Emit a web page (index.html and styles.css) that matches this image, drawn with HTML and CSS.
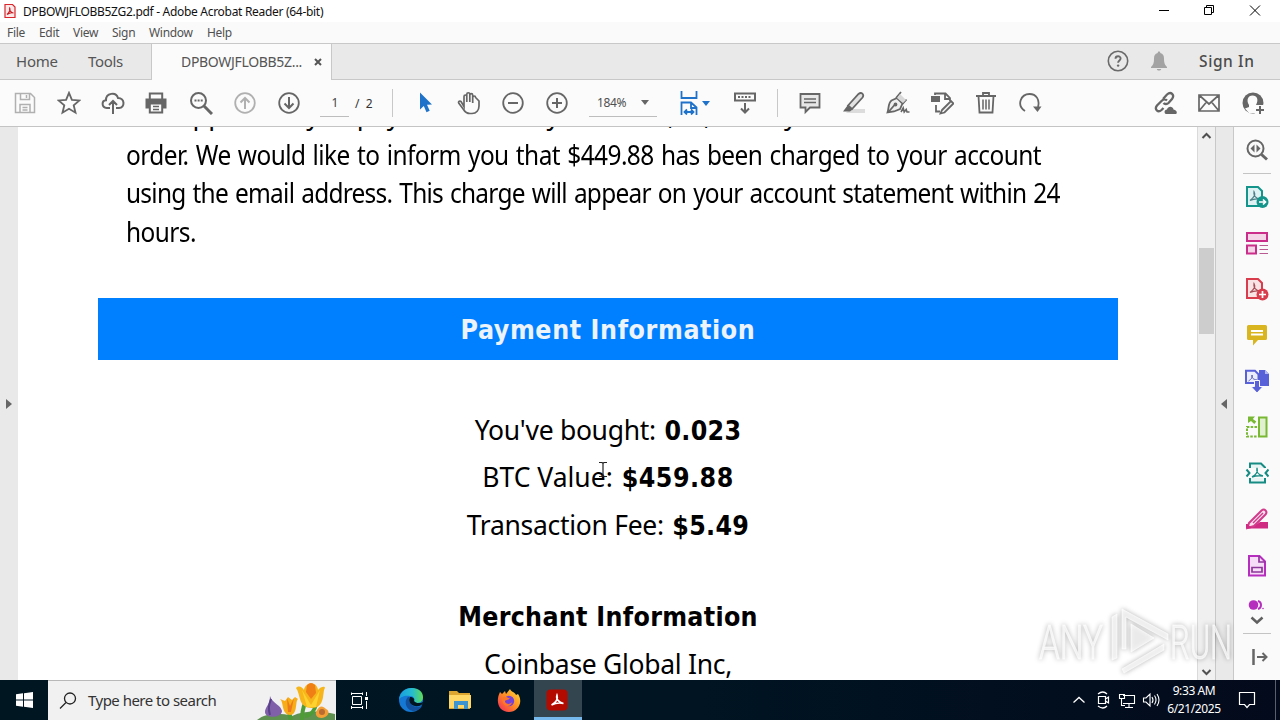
FILE: index.html
```html
<!DOCTYPE html>
<html lang="en">
<head>
<meta charset="utf-8">
<title>DPBOWJFLOBB5ZG2.pdf - Adobe Acrobat Reader (64-bit)</title>
<link rel="stylesheet" href="styles.css">
</head>
<body>
<div class="screen">
  <header class="titlebar">
    <svg class="app-icon" width="12" height="16" viewBox="0 0 12 16"><path d="M1 1.500h7.500L11 4v10.500H1z" fill="#fbe9e9" stroke="#d9252b" stroke-width="1.200"/><path d="M3 11.500C5.500 9.500 6.500 6.500 5.700 5c-.8 2 1.300 4.700 3.800 5-2-.5-4.500.2-6.500 1.500z" fill="none" stroke="#c8181f" stroke-width="1.100"/></svg>
    <span class="title-text">DPBOWJFLOBB5ZG2.pdf - Adobe Acrobat Reader (64-bit)</span>
    <div class="window-buttons">
      <svg viewBox="0 0 46 22"><path d="M15 10.500h10" stroke="#000"/></svg>
      <svg viewBox="0 0 46 22"><path d="M14.500 7.500h7v7h-7zM16.500 7V5.500h7v7H22" fill="none" stroke="#000"/></svg>
      <svg viewBox="0 0 46 22"><path d="M14 5.500l10 10M24 5.500l-10 10" stroke="#000"/></svg>
    </div>
  </header>
  <nav class="menubar"><span class="m-file">File</span><span class="m-edit">Edit</span><span class="m-view">View</span><span class="m-sign">Sign</span><span class="m-window">Window</span><span class="m-help">Help</span></nav>
  <div class="tabs">
    <span class="tab-home">Home</span><span class="tab-tools">Tools</span>
    <div class="tab-active"><span>DPBOWJFLOBB5Z...</span><svg width="8" height="8" viewBox="0 0 8 8"><path d="M1 1l6 6M7 1L1 7" stroke="#555" stroke-width="2"/></svg></div>
    <div class="tabs-right">
      <svg width="24" height="24" viewBox="0 0 24 24"><circle cx="12" cy="12" r="9.700" fill="none" stroke="#6a6a6a" stroke-width="1.600"/><path d="M9.500 9.800c0-3.400 5.200-3.200 5.100-.2 0 1.800-2.500 1.900-2.500 4.100" fill="none" stroke="#6a6a6a" stroke-width="1.900"/><circle cx="12.100" cy="16.600" r="1.200" fill="#6a6a6a"/></svg>
      <svg class="bell" width="24" height="24" viewBox="0 0 24 24"><path d="M12 2.500c1 0 1.300.7 1.300 1.500 2.800.6 3.700 2.700 3.700 5.500 0 5 1 6.500 3 8.500v1H4v-1c2-2 3-3.500 3-8.500C7 6.700 7.900 4.600 10.700 4c0-.8.3-1.500 1.300-1.500zM9.800 20h4.400c-.4 2-4 2-4.400 0z" fill="#a3a3a3"/></svg>
      <span class="sign-in">Sign In</span>
    </div>
  </div>
  <div class="toolbar">
    <div class="tool muted"><svg viewBox="0 0 24 24"><path d="M2.500 2.500h15l4 4v15h-19zM7.500 2.500v6h9v-6M7 21v-7.500h10V21M13.500 4v3M9.500 16.500h5M9.500 19h5" stroke-width="1.500"/></svg></div>
    <div class="tool"><svg viewBox="0 0 24 24"><path d="M12 1.800l2.900 7 7.500.6-5.700 4.900 1.800 7.400-6.500-4-6.500 4 1.800-7.400-5.700-4.900 7.500-.6z"/></svg></div>
    <div class="tool"><svg viewBox="0 0 24 24"><path d="M9 17H5.800C.2 16.500.5 9.500 5 9.200 4.800 2 15 .3 17 7c7 0 7.300 9.800 1 10h-3M12 23V10M8 14l4-4 4 4" stroke-width="2"/></svg></div>
    <div class="tool print"><svg viewBox="0 0 24 24"><path d="M5.800 8V2.500h12.400V8" fill="#fbfbfb" stroke-width="2"/><path d="M1.500 7.500h21v10h-21z" fill="#666" stroke="none"/><path d="M5.800 12.500h12.400v9H5.800z" fill="#fbfbfb" stroke-width="2"/><path d="M9 15.500h6M9 18.500h6" stroke-width="1.300"/></svg></div>
    <div class="tool"><svg viewBox="0 0 24 24"><circle cx="9.500" cy="9.500" r="7.500" stroke-width="2"/><path d="M15 15l8 8" stroke-width="3"/><path d="M5.500 9.500h2M8.600 9.500h2M11.700 9.500h2" stroke-width="2"/></svg></div>
    <div class="tool muted"><svg viewBox="0 0 24 24"><circle cx="12" cy="12" r="9.800"/><path d="M12 18V7M7.500 11.500L12 7l4.500 4.500" stroke-width="2"/></svg></div>
    <div class="tool"><svg viewBox="0 0 24 24"><circle cx="12" cy="12" r="9.800"/><path d="M12 6v11M7.500 12.500L12 17l4.500-4.500" stroke-width="2"/></svg></div>
    <span class="page-input">1</span><span class="page-total">/ &nbsp;2</span>
    <i class="divider first"></i>
    <div class="tool"><svg viewBox="0 0 24 24"><path d="M7 1.500l12 12-5 .3 2.700 6-3.200 1.500-2.700-6.200L7 18.500z" fill="#1f72c9" stroke="none"/></svg></div>
    <div class="tool"><svg viewBox="0 0 24 24"><path d="M7 15.500V5.500c0-2 2.800-2 2.800 0V11 3.300c0-2.100 3-2.100 3 0V11 4.200c0-2 2.900-2 2.900 0V12 6.500c0-2 2.900-2 2.900 0L22 10v5c0 4-2.500 7.500-7 7.500h-2c-3 0-5-1.500-6.500-4L1.700 12c-.8-1.700 1.300-2.500 2.500-1.300z" stroke-width="1.700"/></svg></div>
    <div class="tool"><svg viewBox="0 0 24 24"><circle cx="12" cy="12" r="9.800"/><path d="M7 12h10" stroke-width="2"/></svg></div>
    <div class="tool"><svg viewBox="0 0 24 24"><circle cx="12" cy="12" r="9.800"/><path d="M7 12h10M12 7v10" stroke-width="2"/></svg></div>
    <div class="zoom-box"><span>184%</span><i class="caret"></i></div>
    <div class="tool fit"><svg viewBox="0 0 24 24"><path d="M4.500 0v7h15V0M4.500 24V11.500H14l5.500 5V24M14 11.500V17h5M7.500 21h9M10 18.500L7.500 21l2.500 2.500M14 18.500l2.500 2.500-2.500 2.500" stroke="#1f72c9"/></svg></div>
    <i class="caret blue"></i>
    <div class="tool scroll-tool"><svg viewBox="0 0 24 24"><path d="M2 2.500h20v7H2zM12 12v10M8 17.500l4 4 4-4" stroke-width="2"/><path d="M5 6h14" stroke-dasharray="2 1.500" stroke-width="2"/></svg></div>
    <i class="divider second"></i>
    <div class="tool"><svg viewBox="0 0 24 24"><path d="M2.500 3h19v13.500H12L7.500 21v-4.500h-5z" fill="#e7e7e7"/><path d="M6 8h12M6 11.500h12" stroke-width="1.500"/></svg></div>
    <div class="tool"><svg viewBox="0 0 24 24"><path d="M8 18h15v4H4z" fill="#dcdcdc" stroke="none"/><path d="M6 14.500L16.500 3c3-2.500 6 .5 4 3.500L10 18z" fill="#e2e2e2"/><path d="M5.500 14.500l5 4L8 20.500H1z" fill="#666" stroke="none"/></svg></div>
    <div class="tool"><svg viewBox="0 0 24 24"><path d="M1.500 21.500C3 17 2 12 5.500 9.500L11 7l5.500 5.500L14 18l-6 2.500z" fill="#efefef"/><path d="M2 21.500l6.500-7.500M10 7l5-6M16.500 13l4-4.500"/><path d="M14 3l6 6-3 3-6-5z" fill="#d8d8d8" stroke="none"/><circle cx="9.500" cy="13.500" r="1" fill="#666"/><path d="M15 21l2.200-4 1 4 2-2.500.8 2.500h2.500" stroke-width="1.600"/></svg></div>
    <div class="tool"><svg viewBox="0 0 24 24"><path d="M5 4V2.500h10.500L20 7v3M15 2.500V8h5M6 14v6.500h4"/><path d="M1 5h9v6H1z" fill="#666" stroke="none"/><path d="M12 19L21 10l2.500 2.500-9 9-4 1z" fill="#eee"/></svg></div>
    <div class="tool"><svg viewBox="0 0 24 24"><path d="M4.500 5l1 16.500h13l1-16.500M2 5h20M9 5V2h6v3" /><path d="M9 8.500v10M12 8.500v10M15 8.500v10" stroke-width="1.500"/></svg></div>
    <div class="tool"><svg viewBox="0 0 24 24"><path d="M7 20C-2 14 3 3 11.500 3c7 0 10.500 6 8.500 13"/><path d="M15 15.500h8.500L19.500 21z" fill="#666" stroke="none"/></svg></div>
    <div class="toolbar-right">
      <div class="tool"><svg viewBox="0 0 24 24"><path d="M10 8l4-4.500c4-3.500 8 .5 5 4.500l-3.500 4c-1.500 1.500-4 1.200-5 0M14 9.500c-1.500-1.500-4-1-5.500.5L4 14.500c-3 4 1 7.500 4.500 4.500l2-2" stroke-width="2.300"/><path d="M13 23c-2.500-1-1.500-4.500 1-4.500 1-4 6-3.500 6.500 0C24 19 24.500 22 23 23z" fill="#666" stroke="none"/></svg></div>
      <div class="tool"><svg viewBox="0 0 24 24"><path d="M2 4h20v16H2zM2 4l10 9L22 4M2 20l7.500-9M22 20l-7.500-9" stroke-width="1.700"/></svg></div>
      <div class="tool"><svg viewBox="0 0 24 24"><circle cx="12" cy="12" r="10.500" fill="#666" stroke="none"/><path d="M8 14c-3-5-1-9.500 3.500-9.500s6.500 4 3.500 9.500v2l3 1-2 5H8l-4-4.500L8 16z" fill="#fbfbfb" stroke="none"/><path d="M14 14h10v10H14z" fill="#fbfbfb" stroke="none"/><path d="M19 15v8M15 19h8" stroke-width="2"/></svg></div>
    </div>
  </div>

  <main class="workspace">
    <div class="left-strip"><i class="tri-right"></i></div>
    <section class="page">
      <div class="para l0"><span class="w1">The opportunity to pay</span><span class="w2">in the form by</span><span class="w3">the total</span><span class="w4">,</span><span class="w5">,</span><span>y</span></div>
      <div class="para l1">order. We would like to inform you that $449.88 has been charged to your account</div>
      <div class="para l2">using the email address. This charge will appear on your account statement within 24</div>
      <div class="para l3">hours.</div>
      <h2 class="bar">Payment Information</h2>
      <div class="row r1">You've bought: <b>0.023</b></div>
      <div class="row r2">BTC Value: <b>$459.88</b></div>
      <div class="row r3">Transaction Fee: <b>$5.49</b></div>
      <div class="row r4"><b>Merchant Information</b></div>
      <div class="row r5">Coinbase Global Inc,</div>
    </section>
    <div class="scrollbar">
      <svg width="17" height="17" viewBox="0 0 17 17"><path d="M4.500 11l4-4 4 4" fill="none" stroke="#505050" stroke-width="2"/></svg>
      <i class="thumb"></i>
      <svg width="17" height="17" viewBox="0 0 17 17"><path d="M4.500 7l4 4 4-4" fill="none" stroke="#505050" stroke-width="2"/></svg>
    </div>
    <div class="right-strip"><i class="tri-left"></i></div>
    <aside class="side">
      <div class="side-tool"><svg viewBox="0 0 24 24"><g fill="none" stroke="#666"><circle cx="10.500" cy="10.500" r="8" stroke-width="2"/><path d="M16.500 16.500l5.500 5" stroke-width="3"/></g><path d="M9.500 6.500v8L5.500 10.500zM11.500 6.500v8l4-4z" fill="#666"/></svg></div>
      <i class="side-line"></i>
      <div class="side-tool"><svg viewBox="0 0 24 24"><path d="M2 2h11l4 4v15H2z" fill="#dff1f3" stroke="#13958b" stroke-width="2"/><path d="M5 15.500c4-3 5.500-6.500 4-9-1 4 2 7 6 7.500-4-.5-7 0-10 1.500z" fill="none" stroke="#4d7f88" stroke-width="1.200"/><circle cx="17.500" cy="17" r="6" fill="#13958b"/><path d="M14 17h6.500M18 14.500l2.500 2.500-2.500 2.500" fill="none" stroke="#fff" stroke-width="1.700"/></svg></div>
      <div class="side-tool"><svg viewBox="0 0 24 24"><path d="M2 2h20v8H2zM2 14.500h9v8H2z" fill="#f4d5e7" stroke="#cb2e8a" stroke-width="2"/><path d="M14.500 14.500h8.500M14.500 18.500h8.500M14.500 22.500h8.500" stroke="#b95a93"/></svg></div>
      <div class="side-tool"><svg viewBox="0 0 24 24"><path d="M2 2h11l4 4v15H2z" fill="#fae3e4" stroke="#d93c4c" stroke-width="2"/><path d="M5 15.500c4-3 5.500-6.500 4-9-1 4 2 7 6 7.500-4-.5-7 0-10 1.500z" fill="none" stroke="#a64d58" stroke-width="1.200"/><circle cx="17.500" cy="17.500" r="6" fill="#d93c4c"/><path d="M14 17.500h7M17.500 14v7" stroke="#fff" stroke-width="1.700"/></svg></div>
      <div class="side-tool"><svg viewBox="0 0 24 24"><path d="M3.500 2h17q1.500 0 1.500 1.500v12q0 1.500-1.500 1.500H13l-5 5.500V17H3.500Q2 17 2 15.500v-12Q2 2 3.500 2z" fill="#d9b51f"/><path d="M6 8h12M6 11.500h12" stroke="#fff" stroke-width="1.800"/></svg></div>
      <div class="side-tool"><svg viewBox="0 0 24 24"><path d="M14 1h6l4 4v12H14z" fill="#5961d8"/><path d="M20 1v4h4" fill="#b6baf3"/><path d="M1 1.800h9l3.500 3.500V14H1z" fill="#eceefe" stroke="#5961d8" stroke-width="2"/><path d="M3.500 12c3-2 4.500-4 3.500-6-.8 3 1.500 4.500 5 5" fill="none" stroke="#555bb2"/><path d="M9.500 11.500h5v6H18L12 24l-6-6.500h3.500z" fill="#5961d8" stroke="#fafafa"/></svg></div>
      <div class="side-tool"><svg viewBox="0 0 24 24"><path d="M14 2.500h7.500v19H14z" fill="#e1f0d1" stroke="#78b833" stroke-width="2"/><path d="M12 12H2v9.500h10" fill="none" stroke="#78b833" stroke-width="2" stroke-dasharray="2.500 1.300"/><path d="M3 8V1.500h7L7.800 4l3.500 2.500-2 2.500L6 6z" fill="#78b833"/></svg></div>
      <div class="side-tool"><svg viewBox="0 0 24 24"><path d="M5 7V2.500h11l4 4V7M5 17v4.500h15V17" fill="#e7f4f3" stroke="#168b83" stroke-width="2"/><path d="M7 16c4-2 6-5 5-9-1 4 2 7 6 8-4-.5-7-.5-11 1z" fill="none" stroke="#168b83" stroke-width="1.400"/><path d="M1.500 8.500l3 3.500-3 3.500M23.500 8.500l-3 3.500 3 3.500" fill="none" stroke="#168b83" stroke-width="2"/></svg></div>
      <div class="side-tool"><svg viewBox="0 0 24 24"><path d="M1 17h11l3-2h8v6.500H1z" fill="#cf2b83"/><path d="M4 16L16.500 3.500c3-2.500 6.500 1 4 4L9 19l-6.500 2z" fill="#fbe2ef" stroke="#d23b8b" stroke-width="2"/><path d="M8 16L18 6" stroke="#d23b8b" stroke-width="1.500"/><path d="M2 17l5 4-6 .5z" fill="#cf2b83"/></svg></div>
      <div class="side-tool"><svg viewBox="0 0 24 24"><path d="M4 3h10.500L20 8.500V22.500H4z" fill="#f7dcf8" stroke="#b52ebd" stroke-width="2"/><path d="M14 3v6h6M7 14.500h10v4.500H7z" fill="none" stroke="#8e379b" stroke-width="1.700"/></svg></div>
      <div class="side-partial"><svg width="24" height="10" viewBox="0 0 24 10"><circle cx="8.500" cy="5" r="4.800" fill="#b52ebd"/><path d="M13 1c4 1 4 7 0 8" fill="none" stroke="#b52ebd" stroke-width="2"/><circle cx="18" cy="8.500" r=".8" fill="#b52ebd"/></svg></div>
      <svg class="side-chevron" width="24" height="14" viewBox="0 0 24 14"><path d="M6.500 4.500l5.500 5 5.500-5" fill="none" stroke="#606060" stroke-width="2.500"/></svg>
      <i class="side-line"></i>
      <div class="side-tool"><svg viewBox="0 0 24 24"><path d="M8.500 4v16" stroke="#666" stroke-width="2.500"/><path d="M12 12h9M17.500 8l4 4-4 4" fill="none" stroke="#666" stroke-width="2"/></svg></div>
    </aside>
  </main>

  <footer class="taskbar">
    <div class="start"><svg width="17" height="16" viewBox="0 0 17 16"><path d="M0 2.300l7-1v6.200H0zM8 1.200L17 0v7.500H8zM0 8.500h7v6.200l-7-1zM8 8.500h9V16l-9-1.300z" fill="#fff"/></svg></div>
    <div class="search">
      <svg width="18" height="18" viewBox="0 0 18 18"><circle cx="11" cy="6.500" r="5.500" fill="none" stroke="#222" stroke-width="1.300"/><path d="M7 10.500L1 16.500" stroke="#222" stroke-width="1.300"/></svg>
      <span>Type here to search</span>
      <svg class="flowers" width="82" height="39" viewBox="0 0 82 39"><path d="M3 39c10-8 24-7 35-4 14-6 29-5 43-2v6z" fill="#5f9150"/><path d="M48 39c0-7 1-12 3-17M37 39c-1-5-2-7-3-11M51 35c6-1 10-6 11-12" fill="none" stroke="#4d9c35" stroke-width="4"/><path d="M16 15c2 7 11 9 12 15 0 7-17 8-17 1 0-5 5-7 5-16z" fill="#8060a8"/><path d="M17 18c-2 6-3 9-1 16" stroke="#594289" fill="none" stroke-width="2"/><path d="M42 7c3-3 6-1 8 2 1-8 13-9 14 0 3-4 7-4 7-2-3 3 1 20-13 20C44 27 47 14 42 7z" fill="#f6b51b"/><path d="M53 4q4-4 8 0l1 8-5 6-5-7z" fill="#f07f16"/><path d="M48 9l9 15 9-15-4 17h-9z" fill="#ffd22e"/><path d="M26 18l5 2 3-4 4 3 3-3 3 2c-3 2 0 16-8 16-9-1-6-13-10-16z" fill="#f7ad18"/><path d="M33 17l3 8 4-8-3 14h-3z" fill="#ed7a1a"/><path d="M63 29c3-5 6-4 9-1 4 2 3 6-1 8-5 3-12-1-8-7z" fill="#f4a036"/><circle cx="68" cy="31" r="3" fill="#b96b31"/></svg>
    </div>
    <div class="task-item"><svg viewBox="0 0 24 24"><path d="M5.500 8.500h9v8h-9zM4.500 4.500V7M15.500 4.500V7M4 5.500h12M4 19.500h12M4.500 18v3M15.500 18v3M19.500 4v4M19.500 13v8" fill="none" stroke="#fff"/><path d="M18 9h3v3h-3z" fill="#fff"/></svg></div>
    <div class="task-item edge"><svg viewBox="0 0 24 24"><defs><linearGradient id="eg" x1="0" x2="1"><stop offset="0" stop-color="#169ee0"/><stop offset=".55" stop-color="#26bcd0"/><stop offset="1" stop-color="#5fdb55"/></linearGradient></defs><circle cx="12" cy="12" r="12" fill="#1478d4"/><path d="M0 12C1-4 24-3 24 9c0 7-8 7-9 4 1-2 0-5-4-5C6 7 1 9 0 12z" fill="url(#eg)"/><path d="M9 9c-5 5-1 14 6 14 4 0 7-3 8-5-7 3-14-2-13-7 0-1 0-2 1-2z" fill="#124f9c"/><path d="M11 9c-2 4 0 8 5 9 4 1 7-1 8-3V14c-3 2-8 1-9-1 1-2-1-4-4-4z" fill="#001522"/></svg></div>
    <div class="task-item folder"><svg viewBox="0 0 24 24"><path d="M1 3h8l2 2h11v16H1z" fill="#dba530"/><path d="M1 7h22v13H1z" fill="#ffd766"/><path d="M6 21v-8h14v8h-4v-4h-6v4z" fill="#3d94cf"/></svg></div>
    <div class="task-item firefox"><svg viewBox="0 0 24 24"><defs><linearGradient id="ff" x1="1" y1="0" x2="0" y2="1"><stop offset="0" stop-color="#ffe33b"/><stop offset=".5" stop-color="#ff8a24"/><stop offset="1" stop-color="#f0215f"/></linearGradient></defs><path d="M3 4l2 2 3-3 1 3 4-5c1 3 5 3 6 6l2-1c6 9-1 18-9 18C2 24-2 14 3 4z" fill="url(#ff)"/><circle cx="12" cy="13" r="5.200" fill="#7542d9"/><path d="M5 10c4-3 5 0 8 0-2 3-5 1-5 4 2 3 6 2 7 0-1 6-10 6-10-4z" fill="#ff7725"/></svg></div>
    <div class="task-item active"><svg viewBox="0 0 24 24"><rect x="1.500" y="1.500" width="21" height="21" rx="4" fill="#b30b00"/><path d="M6.500 17c4-2 7-6 5.500-10-1.500 4 2 7.500 6.500 8.500-4-1-8-.5-12 1.500z" fill="none" stroke="#fff" stroke-width="1.600"/></svg></div>
    <div class="tray">
      <svg viewBox="0 0 24 24"><path d="M6.500 14.500l5.500-5 5.500 5" fill="none" stroke="#fff" stroke-width="1.300"/></svg>
      <svg viewBox="0 0 24 24"><path d="M7.500 8.500h7v7h-7zM14.500 11l3-2v6l-3-2M7 6q5-4 9 0M7 18q5 4 9 0" fill="none" stroke="#fff" stroke-width="1.200"/></svg>
      <svg viewBox="0 0 24 24"><path d="M8 7.500h11.500v8H8M14 16v3M10 19.500h8M4.500 6.500h5v4h-5zM6.500 11v6.500H10" fill="none" stroke="#fff" stroke-width="1.100"/></svg>
      <svg viewBox="0 0 24 24"><path d="M4.500 10h2.500l4-4v12l-4-4H4.500zM13 9q2 3 0 6M15.500 7.500q3 4.500 0 9M18 6q4 6 0 12" fill="none" stroke="#fff" stroke-width="1.100"/></svg>
      <div class="clock"><span>9:33 AM</span><span>6/21/2025</span></div>
      <svg class="notice" viewBox="0 0 24 24"><path d="M4.500 4.500h15v12h-5L12 19.500l-2.500-3h-5z" fill="none" stroke="#fff" stroke-width="1.200"/></svg>
      <i class="show-desktop"></i>
    </div>
  </footer>

  <svg class="ibeam" width="10" height="17" viewBox="0 0 10 17"><path d="M1 1.500h3l1 1 1-1h3M5 2v13M1 15.500h3l1-1 1 1h3" fill="none" stroke="#222" stroke-width="1.200"/></svg>
  <svg class="watermark" width="204" height="76" viewBox="0 0 204 76">
    <g class="wm-shape"><text x="5" y="56" textLength="64" lengthAdjust="spacingAndGlyphs">ANY</text><text x="136" y="56" textLength="62" lengthAdjust="spacingAndGlyphs">RUN</text>
    <path d="M78 57V14l5-3v44zM88 6l46 25v6L92 14v32h-4zM88 66l42-25v6L90 70z"/><path d="M97 21l23 14-23 14z"/></g>
  </svg>
</div>
</body>
</html>
```
FILE: styles.css
```css
* { box-sizing: border-box; }
body { margin: 0; font-family: "Noto Sans", "Open Sans", sans-serif; overflow: hidden; }
svg { display: block; flex: none; }
.screen { position: relative; width: 1280px; height: 720px; overflow: hidden; display: flex; flex-direction: column; background: #fff; }
.titlebar { height: 22px; display: flex; align-items: center; padding-left: 4px; font-size: 12px; color: #111; white-space: nowrap; flex: none; }
.title-text { margin-left: 7px; letter-spacing: -0.3px; }
.window-buttons { margin-left: auto; margin-right: -2px; display: flex; }
.window-buttons svg { width: 46px; height: 22px; }
.menubar { height: 21px; flex: none; display: flex; align-items: center; background: #fafafa; color: #505050; font-size: 12px; letter-spacing: -0.3px; padding-left: 7px; }
.m-file { width: 32px; }
.m-edit { width: 34px; }
.m-view { width: 39px; }
.m-sign { width: 37px; }
.m-window { width: 58px; }
.tabs { height: 37px; flex: none; display: flex; align-items: center; background: #e9e9e9; border-top: 1px solid #c8c8c8; border-bottom: 1px solid #c8c8c8; font-size: 15px; color: #555; padding: 0 0 1px 16px; }
.tab-home { width: 72px; letter-spacing: -0.2px; }
.tab-tools { width: 63px; letter-spacing: -0.3px; }
.tab-active { width: 181px; height: 37px; align-self: flex-start; background: #fbfbfb; border-left: 1px solid #c8c8c8; border-right: 1px solid #c8c8c8; display: flex; align-items: center; padding: 0 0 2px 29px; font-size: 14px; letter-spacing: -0.320px; }
.tab-active span { width: 133px; }
.tabs-right { margin-left: auto; display: flex; align-items: center; padding-right: 25px; }
.bell { margin: 0 28px 0 17px; }
.sign-in { font-size: 15.500px; font-weight: 500; letter-spacing: 0.6px; color: #4b4b4b; width: 56px; white-space: nowrap; }
.toolbar { height: 47px; flex: none; display: flex; align-items: center; background: #fbfbfb; border-bottom: 1px solid #c4c4c4; padding-left: 3px; }
.tool { width: 44px; flex: none; display: flex; justify-content: center; }
.tool svg { width: 24px; height: 24px; fill: none; stroke: #666; stroke-width: 1.800; }
.tool.print { padding-right: 2px; }
.tool.muted svg { stroke: #b0b0b0; }
.page-input { width: 29px; height: 27px; margin-left: 9px; padding-left: 1px; text-align: center; font-size: 12px; line-height: 26px; border-bottom: 1px solid #bdbdbd; color: #444; }
.page-total { width: 43px; padding-left: 6px; font-size: 12px; color: #333; }
.divider { width: 1px; height: 28px; background: #c8c8c8; flex: none; }
.divider.first { margin-right: 10px; }
.divider.second { margin: 0 10px; }
.zoom-box { width: 68px; height: 27px; margin-left: 10px; border-bottom: 1px solid #bdbdbd; display: flex; align-items: center; justify-content: space-between; padding: 0 8px; font-size: 12px; letter-spacing: -0.4px; color: #505050; }
.caret { border: 4px solid transparent; border-top: 5px solid #666; border-bottom: 0; flex: none; }
.caret.blue { border-top-color: #1f72c9; margin-left: -9px; }
.fit { margin-left: 10px; }
.scroll-tool { margin-left: 13px; }
.toolbar-right { margin-left: auto; display: flex; padding-right: 5px; }
.workspace { height: 553px; flex: none; display: flex; }
.left-strip { width: 18px; background: #e9e9e9; display: flex; align-items: center; padding-left: 6px; }
.tri-right { border: 5px solid transparent; border-left: 6px solid #666; border-right: 0; }
.tri-left { border: 5px solid transparent; border-right: 6px solid #666; border-left: 0; }
.page { width: 1179px; padding: 0 79px 0 80px; overflow: hidden; font-family: "Noto Sans", sans-serif; font-size: 26.500px; color: #000; white-space: nowrap; }
.para { height: 38.700px; line-height: 38.700px; margin-left: 28px; }
.l0 { margin-top: -32px; height: 40.500px; display: flex; }
.l1, .l2, .l3 { width: max-content; transform: scaleX(.9215); transform-origin: 0 0; letter-spacing: -0.6px; word-spacing: 1.500px; }
.l2 { letter-spacing: -0.8px; }
.w1 { width: 272px; letter-spacing: -0.5px; }
.w2 { width: 136px; text-align: right; margin-right: 8px; letter-spacing: -1px; }
.w3 { width: 126px; }
.w4 { width: 36px; }
.w5 { width: 80px; }
.bar, .row b { font-family: "DejaVu Sans Condensed", "DejaVu Sans", sans-serif; font-stretch: condensed; font-weight: bold; letter-spacing: 0.6px; }
.bar { height: 62px; line-height: 63px; margin: 46.400px 0 0; background: #0080ff; color: #edf3fb; text-align: center; font-size: 26.500px; }
.row { height: 47.400px; line-height: 47.400px; text-align: center; letter-spacing: -0.3px; }
.row b { letter-spacing: 0.300px; }
.r1 { margin-top: 47px; }
.r1 b, .r2 b, .r3 b { margin-left: 2px; }
.r2 { letter-spacing: 0; }
.r2 b { letter-spacing: 0.5px; }
.r4 { margin-top: 44px; }
.scrollbar { width: 19px; background: #f0f0f0; border-left: 1px solid #dadada; border-right: 1px solid #c8c8c8; display: flex; flex-direction: column; }
.thumb { width: 15px; height: 86px; background: #cdcdcd; margin: 104px 0 auto 1px; }
.right-strip { width: 18px; background: #e9e9e9; border-right: 1px solid #c8c8c8; display: flex; align-items: center; padding-left: 5px; }
.side { width: 46px; background: #fafafa; display: flex; flex-direction: column; align-items: center; }
.side-tool { height: 46px; flex: none; display: flex; align-items: center; }
.side-tool svg { width: 24px; height: 24px; }
.side-line { width: 28px; height: 1px; background: #c4c4c4; flex: none; }
.side-partial { height: 25px; padding-top: 12px; }
.side-chevron { margin-bottom: 6px; }
.taskbar { height: 40px; flex: none; display: flex; background: linear-gradient(90deg, #001722, #001422 55%, #030a1b); color: #fff; }
.start { width: 48px; display: flex; align-items: center; justify-content: center; }
.search { width: 288px; background: #f1f1f1; border-top: 1px solid #b8b8b8; display: flex; align-items: center; padding-left: 11px; color: #333; font-size: 15px; }
.search span { margin-left: 11px; padding-bottom: 2px; width: 167px; letter-spacing: -0.52px; white-space: nowrap; }
.flowers { align-self: flex-end; }
.task-item { width: 46px; display: flex; align-items: center; justify-content: center; }
.task-item svg { width: 24px; height: 24px; }
.task-item.edge { width: 58px; }
.task-item.folder { width: 40px; }
.task-item.firefox { width: 54px; padding-left: 3px; }
.task-item.active { width: 48px; background: #33454f; border-bottom: 3px solid #76b9ed; padding: 3px 2px 0 0; }
.tray { margin-left: auto; display: flex; align-items: center; padding-right: 4px; }
.tray svg { width: 24px; height: 24px; }
.clock { width: 62px; display: flex; flex-direction: column; align-items: center; font-size: 12px; line-height: 18px; letter-spacing: -0.4px; white-space: nowrap; }
.notice { margin: 0 16px 0 10px; }
.show-desktop { width: 1px; height: 40px; background: #59606b; }
.ibeam { position: absolute; left: 597.500px; top: 461px; }
.watermark { position: absolute; left: 1034px; top: 603px; }
.wm-shape { fill: #fff; fill-opacity: .7; stroke: #fff; stroke-opacity: .6; stroke-width: 1; filter: drop-shadow(0 0 2.500px rgba(0, 0, 0, .4)); font-family: Roboto, sans-serif; font-size: 48px; font-weight: 300; }
```
